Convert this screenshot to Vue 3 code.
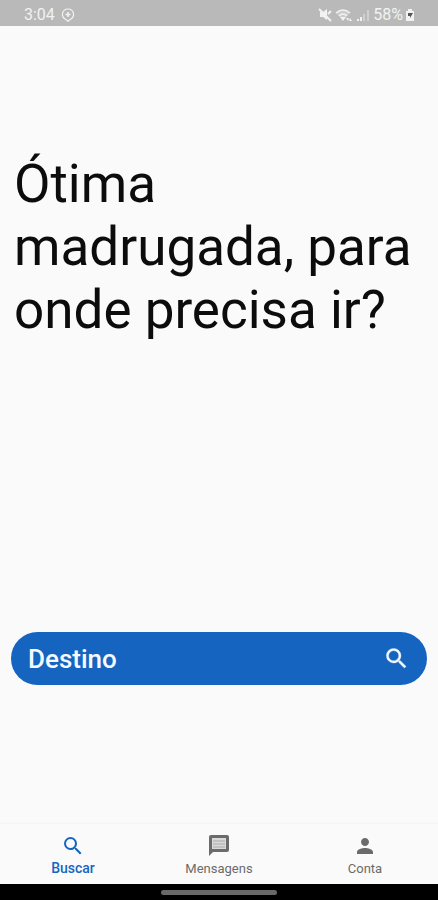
<template>
  <div class="screen">
    <header class="status-bar">
      <div class="status-group">
        <span>3:04</span>
        <svg class="status-pin" viewBox="0 0 14 14" aria-hidden="true">
          <path
            d="M7 1a5.4 5.4 0 0 0-2.6 10.2l2.6 2 2.6-2A5.4 5.4 0 0 0 7 1z"
            fill="none"
            stroke="currentColor"
            stroke-width="1.2"
          />
          <path d="M7 4v5M4.5 6.5h5" stroke="currentColor" stroke-width="1.6" />
        </svg>
      </div>
      <div class="status-group status-right">
        <svg class="status-mute" viewBox="0 0 14 14" aria-hidden="true">
          <path d="M2 4h3l4-3v11L5 9H2z" fill="currentColor" />
          <path
            d="M1 1l12 12M10 6l3-3"
            stroke="currentColor"
            stroke-width="2"
          />
        </svg>
        <svg class="status-wifi" viewBox="0 0 18 14" aria-hidden="true">
          <path d="M1 5q7-6 14 0l-7 7z" fill="currentColor" opacity="0.35" />
          <path
            d="M1 5q7-6 14 0M4 8q4-4 8 0"
            fill="none"
            stroke="currentColor"
            stroke-width="1.6"
          />
          <path d="M8 13L5 9h6z" fill="currentColor" />
          <path d="M11 10h3l-1 3zM14 13l1-3 2 3z" fill="currentColor" />
        </svg>
        <svg class="status-signal" viewBox="0 0 14 14" aria-hidden="true">
          <path d="M1 11h2v2H1zM4 9h2v4H4z" fill="currentColor" />
          <path
            d="M7 6h2v7H7zM11 2h2v11h-2z"
            fill="currentColor"
            opacity="0.4"
          />
        </svg>
        <span>58%</span>
        <svg class="status-battery" viewBox="0 0 8 12" aria-hidden="true">
          <path d="M2 0h4v2h2v10H0V2h2z" fill="currentColor" />
          <path d="M2 4h5L4 9V7H2z" fill="#555555" />
        </svg>
      </div>
    </header>

    <main class="content">
      <h1 class="greeting">Ótima madrugada, para onde precisa ir?</h1>
      <button type="button" class="destination">
        <span>Destino</span>
        <svg class="destination-icon" viewBox="0 0 24 24" aria-hidden="true">
          <path :d="icons.search" />
        </svg>
      </button>
    </main>

    <nav class="bottom-nav">
      <button
        v-for="tab in tabs"
        :key="tab.id"
        type="button"
        class="tab"
        :class="{ active: tab.id === activeTab }"
        @click="activeTab = tab.id"
      >
        <svg class="tab-icon" viewBox="0 0 24 24" aria-hidden="true">
          <path :d="icons[tab.icon]" />
          <template v-if="tab.icon === 'message'">
            <path class="message-paper" d="M5 4h14v11H5z" />
            <path class="message-lines" d="M6 7h12M6 10h12M6 13h12" />
          </template>
        </svg>
        <span class="tab-label">{{ tab.label }}</span>
      </button>
    </nav>

    <footer class="system-bar">
      <div class="home-handle"></div>
    </footer>
  </div>
</template>

<script setup>
import { ref } from 'vue';

const activeTab = ref('search');

const tabs = [
  { id: 'search', label: 'Buscar', icon: 'search' },
  { id: 'messages', label: 'Mensagens', icon: 'message' },
  { id: 'account', label: 'Conta', icon: 'person' },
];

const icons = {
  search:
    'M15.5 14h-.79l-.28-.27A6.47 6.47 0 0 0 16 9.5 6.5 6.5 0 1 0 9.5 16c1.61 0 3.09-.59 4.23-1.57l.27.28v.79l5 4.99L20.49 19l-4.99-5zm-6 0C7.01 14 5 11.99 5 9.5S7.01 5 9.5 5 14 7.01 14 9.5 11.99 14 9.5 14z',
  message: 'M4 1h16a2 2 0 0 1 2 2v13a2 2 0 0 1-2 2H6l-4 4V3a2 2 0 0 1 2-2z',
  person:
    'M12 12c2.21 0 4-1.79 4-4s-1.79-4-4-4-4 1.79-4 4 1.79 4 4 4zm0 2c-2.67 0-8 1.34-8 4v2h16v-2c0-2.66-5.33-4-8-4z',
};
</script>

<style>
body {
  background: #fafafa;
}
</style>

<style scoped>
.screen {
  display: flex;
  flex-direction: column;
  min-height: 100vh;
  background: #fafafa;
  font-family: Roboto, 'Liberation Sans', sans-serif;
}

.status-bar {
  display: flex;
  align-items: center;
  justify-content: space-between;
  height: 26px;
  padding: 3px 24px 0;
  box-sizing: border-box;
  background: #b9b9b9;
  color: #f2f2f2;
  font-size: 16px;
  line-height: 20px;
}

.status-group {
  display: flex;
  align-items: center;
  gap: 6px;
}

.status-right {
  gap: 3px;
}

.status-pin,
.status-mute,
.status-signal {
  width: 14px;
  height: 14px;
}

.status-wifi {
  width: 18px;
  height: 14px;
}

.status-battery {
  width: 8px;
  height: 12px;
}

.content {
  flex: 1;
  display: flex;
  flex-direction: column;
  justify-content: space-between;
  padding: 127px 11px 138px;
}

.greeting {
  margin: 0;
  padding: 0 3px;
  color: #0c0c0c;
  font-size: 53px;
  font-weight: 400;
  line-height: 63px;
}

.destination {
  display: flex;
  align-items: center;
  justify-content: space-between;
  width: 100%;
  height: 53px;
  padding: 0 17px;
  border: 0;
  border-radius: 27px;
  background: #1565c0;
  color: #f5faff;
  font-family: inherit;
  font-size: 26px;
  font-weight: 500;
  cursor: pointer;
}

.destination-icon {
  width: 27px;
  height: 27px;
  fill: currentColor;
  stroke: currentColor;
  stroke-width: 0.3;
}

.bottom-nav {
  display: flex;
  height: 61px;
  border-top: 1px solid #f5f5f5;
  box-sizing: border-box;
}

.tab {
  flex: 1;
  display: flex;
  flex-direction: column;
  align-items: center;
  padding: 10px 0 0;
  border: 0;
  background: none;
  color: #6b6b6b;
  font-family: inherit;
  font-size: 13px;
  line-height: 21px;
  cursor: pointer;
}

.tab.active {
  color: #1565c0;
  font-size: 14px;
  font-weight: 500;
}

.tab-icon {
  width: 24px;
  height: 24px;
  fill: currentColor;
}

.message-paper {
  fill: #d9d9d9;
}

.message-lines {
  stroke: #a9a9a9;
}

.system-bar {
  display: flex;
  align-items: center;
  justify-content: center;
  height: 16px;
  background: #000000;
}

.home-handle {
  width: 116px;
  height: 5px;
  border-radius: 3px;
  background: #696969;
}
</style>
